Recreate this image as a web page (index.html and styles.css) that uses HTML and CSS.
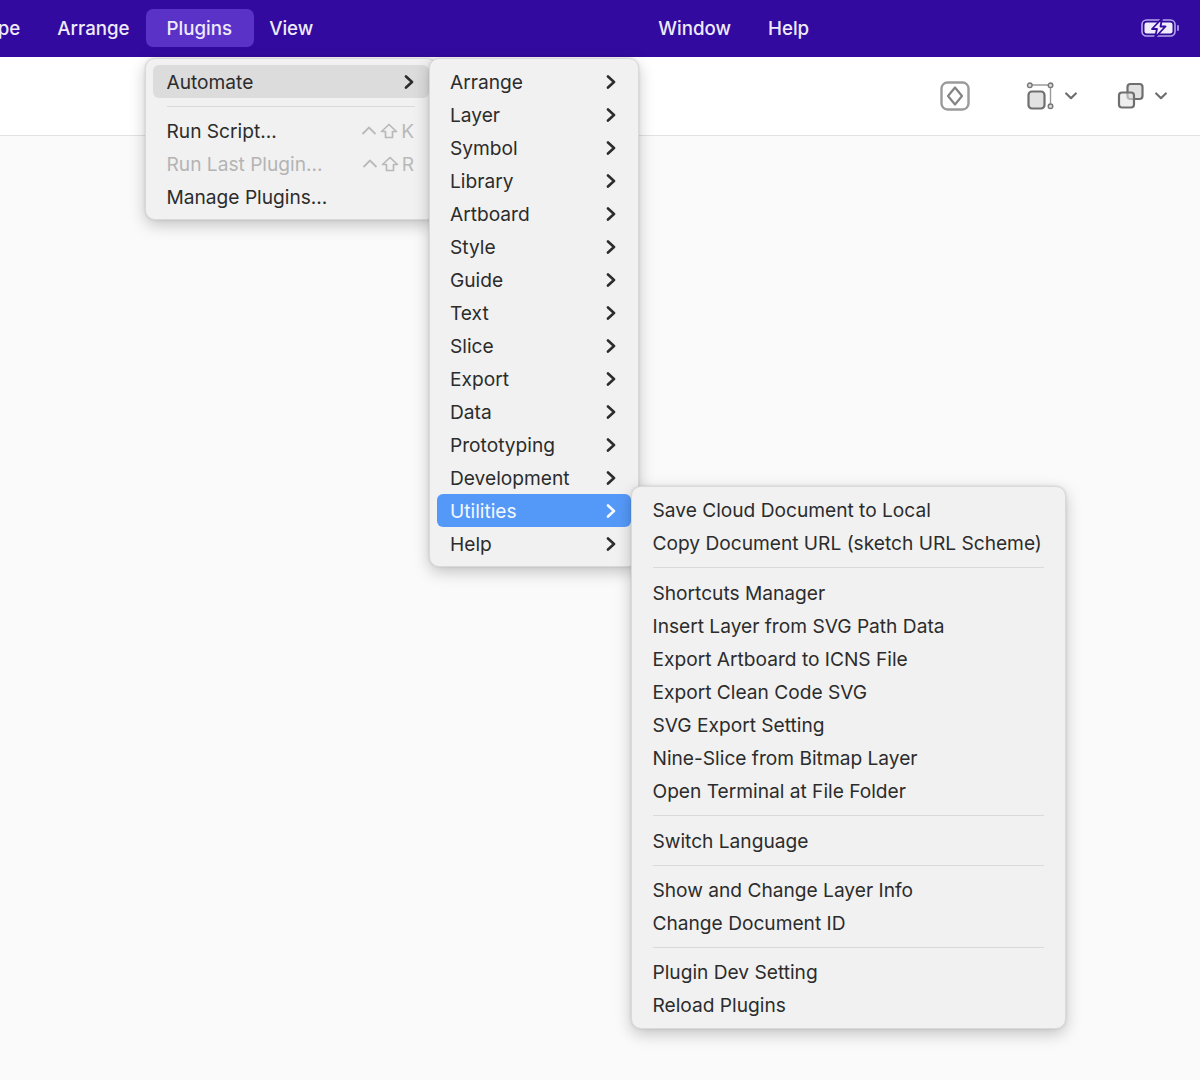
FILE: index.html
```html
<!DOCTYPE html>
<html lang="en">
<head>
<meta charset="utf-8">
<title>Plugins menu</title>
<link rel="stylesheet" href="styles.css">
</head>
<body>
<svg class="defs" width="0" height="0" aria-hidden="true">
  <symbol id="chev" viewBox="0 0 10 14"><path d="M2 1.500 8 7l-6 5.500" fill="none" stroke="currentColor" stroke-width="2.600" stroke-linecap="round" stroke-linejoin="round"/></symbol>
  <symbol id="down" viewBox="0 0 12 8"><path d="M1.200 1.500 6 6.200l4.800-4.700" fill="none" stroke="#6e6e6e" stroke-width="2.200" stroke-linecap="round" stroke-linejoin="round"/></symbol>
  <symbol id="ctrl" viewBox="0 0 16 12"><path d="M1.500 9 8 2.500 14.500 9" fill="none" stroke="currentColor" stroke-width="1.800"/></symbol>
  <symbol id="shift" viewBox="0 0 18 16"><path d="M9 1.500 16.500 8.500H12.500V14.500H5.500V8.500H1.500Z" fill="none" stroke="currentColor" stroke-width="1.700" stroke-linejoin="round"/></symbol>
</svg>

<header class="menubar">
  <nav class="menu-left">
    <span class="bar-item type">Type</span>
    <span class="bar-item">Arrange</span>
    <span class="bar-item active">Plugins</span>
    <span class="bar-item">View</span>
  </nav>
  <nav class="menu-mid">
    <span class="bar-item">Window</span>
    <span class="bar-item">Help</span>
  </nav>
  <svg class="battery" width="40" height="20" viewBox="0 0 40 20" aria-label="Battery charging">
    <rect x="1" y="2" width="33" height="16" rx="4.500" fill="#2f0c98" stroke="#b7a3ec" stroke-width="1.600"/>
    <rect x="3.500" y="4.500" width="28" height="11" rx="2.200" fill="#f0ebfb"/>
    <rect x="36" y="7" width="2" height="6" rx="1" fill="#9f8ae0"/>
    <path d="M21 0.500 11 11H16l-2 8.500 10.500-11H19.500Z" fill="#f0ebfb" stroke="#330a9f" stroke-width="1.800" stroke-linejoin="round"/>
  </svg>
</header>

<section class="toolbar">
  <svg class="tool-a" width="30" height="30" viewBox="0 0 30 30" aria-label="Component">
    <rect x="1.500" y="1.500" width="27" height="27" rx="6" fill="#fff" stroke="#9b9b9b" stroke-width="2.400"/>
    <path d="M15 6.500 22 15 15 23.500 8 15Z" fill="#fff" stroke="#848484" stroke-width="2.200" stroke-linejoin="round"/>
  </svg>
  <div class="tool-group resize">
    <svg width="30" height="30" viewBox="0 0 30 30" aria-label="Resize">
      <path d="M4 3H24.500V24" fill="none" stroke="#9a9a9a" stroke-width="1.400"/>
      <circle cx="3.800" cy="3.300" r="2.300" fill="#d8d8d8" stroke="#777" stroke-width="1.400"/>
      <circle cx="24.500" cy="3.300" r="2.300" fill="#d8d8d8" stroke="#777" stroke-width="1.400"/>
      <circle cx="24.500" cy="24.300" r="2.300" fill="#d8d8d8" stroke="#777" stroke-width="1.400"/>
      <rect x="2.500" y="9.500" width="16" height="17" rx="3.500" fill="#e2e2e2" stroke="#6f6f6f" stroke-width="2.200"/>
    </svg>
    <svg class="caret" width="12" height="8"><use href="#down"/></svg>
  </div>
  <div class="tool-group combine">
    <svg width="28" height="28" viewBox="0 0 28 28" aria-label="Combine">
      <rect x="10.500" y="2" width="15" height="15" rx="3" fill="#e2e2e2" stroke="#6f6f6f" stroke-width="2.200"/>
      <rect x="2" y="10.500" width="15" height="15" rx="3" fill="#e2e2e2" fill-opacity=".6" stroke="#6f6f6f" stroke-width="2.200"/>
    </svg>
    <svg class="caret" width="12" height="8"><use href="#down"/></svg>
  </div>
</section>
<main class="canvas"></main>

<div class="menu menu-one">
  <div class="row hover"><span>Automate</span><svg class="chev" width="10" height="14"><use href="#chev"/></svg></div>
  <div class="sep tight"></div>
  <div class="row"><span>Run Script...</span><span class="keys"><svg width="16" height="12"><use href="#ctrl"/></svg><svg width="18" height="16"><use href="#shift"/></svg><span>K</span></span></div>
  <div class="row disabled"><span>Run Last Plugin...</span><span class="keys"><svg width="16" height="12"><use href="#ctrl"/></svg><svg width="18" height="16"><use href="#shift"/></svg><span>R</span></span></div>
  <div class="row"><span>Manage Plugins...</span></div>
</div>

<div class="menu menu-two">
  <div class="row"><span>Arrange</span><svg class="chev" width="10" height="14"><use href="#chev"/></svg></div>
  <div class="row"><span>Layer</span><svg class="chev" width="10" height="14"><use href="#chev"/></svg></div>
  <div class="row"><span>Symbol</span><svg class="chev" width="10" height="14"><use href="#chev"/></svg></div>
  <div class="row"><span>Library</span><svg class="chev" width="10" height="14"><use href="#chev"/></svg></div>
  <div class="row"><span>Artboard</span><svg class="chev" width="10" height="14"><use href="#chev"/></svg></div>
  <div class="row"><span>Style</span><svg class="chev" width="10" height="14"><use href="#chev"/></svg></div>
  <div class="row"><span>Guide</span><svg class="chev" width="10" height="14"><use href="#chev"/></svg></div>
  <div class="row"><span>Text</span><svg class="chev" width="10" height="14"><use href="#chev"/></svg></div>
  <div class="row"><span>Slice</span><svg class="chev" width="10" height="14"><use href="#chev"/></svg></div>
  <div class="row"><span>Export</span><svg class="chev" width="10" height="14"><use href="#chev"/></svg></div>
  <div class="row"><span>Data</span><svg class="chev" width="10" height="14"><use href="#chev"/></svg></div>
  <div class="row"><span>Prototyping</span><svg class="chev" width="10" height="14"><use href="#chev"/></svg></div>
  <div class="row"><span>Development</span><svg class="chev" width="10" height="14"><use href="#chev"/></svg></div>
  <div class="row selected"><span>Utilities</span><svg class="chev" width="10" height="14"><use href="#chev"/></svg></div>
  <div class="row"><span>Help</span><svg class="chev" width="10" height="14"><use href="#chev"/></svg></div>
</div>

<div class="menu menu-three">
  <div class="row"><span>Save Cloud Document to Local</span></div>
  <div class="row"><span>Copy Document URL (sketch URL Scheme)</span></div>
  <div class="sep"></div>
  <div class="row"><span>Shortcuts Manager</span></div>
  <div class="row"><span>Insert Layer from SVG Path Data</span></div>
  <div class="row"><span>Export Artboard to ICNS File</span></div>
  <div class="row"><span>Export Clean Code SVG</span></div>
  <div class="row"><span>SVG Export Setting</span></div>
  <div class="row"><span>Nine-Slice from Bitmap Layer</span></div>
  <div class="row"><span>Open Terminal at File Folder</span></div>
  <div class="sep"></div>
  <div class="row"><span>Switch Language</span></div>
  <div class="sep tight"></div>
  <div class="row"><span>Show and Change Layer Info</span></div>
  <div class="row"><span>Change Document ID</span></div>
  <div class="sep tight"></div>
  <div class="row"><span>Plugin Dev Setting</span></div>
  <div class="row"><span>Reload Plugins</span></div>
</div>
</body>
</html>
```

FILE: styles.css
```css
* { box-sizing: border-box; }
html, body { margin: 0; height: 1080px; overflow: hidden; }
body {
  background: #fafafa;
  font-family: Inter, "Liberation Sans", sans-serif;
  font-size: 19.15px;
  color: #2c2c2c;
  display: flex;
  flex-direction: column;
  position: relative;
}
.defs { position: absolute; }

.menubar {
  height: 57px;
  flex: none;
  background: #330a9f;
  display: flex;
  align-items: center;
  padding-bottom: 1px;
  color: #efeafb;
  font-size: 18.7px;
  font-weight: 500;
}
.menu-left { display: flex; gap: 37px; margin-left: -24px; }
.menu-mid { display: flex; gap: 37px; margin-left: 345px; }
.bar-item { position: relative; white-space: nowrap; z-index: 0; }
.bar-item.active::before {
  content: "";
  position: absolute;
  z-index: -1;
  inset: -8px -22px -7px -21px;
  background: #5a32c8;
  border-radius: 7px;
}
.battery { margin-left: auto; margin-right: 19px; }

.toolbar {
  height: 79px;
  flex: none;
  background: #fff;
  border-bottom: 1px solid #e2e2e2;
  display: flex;
  align-items: center;
  justify-content: flex-end;
  padding-right: 33px;
}
.tool-a { margin-right: 56px; }
.tool-group { display: flex; align-items: center; }
.tool-group .caret { margin-left: 9px; }
.resize { margin-right: 40px; }
.resize svg:first-child { margin-top: 2px; }
.combine .caret { margin-left: 10px; }

.canvas { flex: 1; }

.menu {
  position: absolute;
  background: #f1f1f1;
  border: 1px solid #d9d9d9;
  border-radius: 10px;
  padding: 6px 7px;
  box-shadow: 0 5px 16px rgba(0, 0, 0, .22), 0 0 3px rgba(0, 0, 0, .12);
}
.menu-one { left: 145px; top: 58px; width: 292px; z-index: 1; }
.menu-two { left: 429px; top: 58px; width: 210px; z-index: 2; }
.menu-three { left: 631px; top: 486px; width: 435px; z-index: 3; padding-bottom: 7px; }

.row {
  height: 33px;
  padding: 0 14px 0 13px;
  display: flex;
  align-items: center;
  justify-content: space-between;
  border-radius: 6px;
  white-space: nowrap;
}
.menu-one .row { padding-left: 13.500px; }
.menu-three .row { padding-left: 13.500px; }
.row.hover { background: #dcdcdc; }
.row.selected { background: #5599f8; color: #f4f8ff; }
.row.disabled { color: #b4b4b4; }
.chev { color: #2c2c2c; margin-right: 1px; flex: none; }
.selected .chev { color: #f4f8ff; }

.keys {
  display: flex;
  align-items: center;
  gap: 3px;
  color: #b9b9b9;
  margin-right: 1px;
}

.sep {
  height: 1px;
  margin: 8px 14px;
  background: #dadada;
}
.sep.tight { margin-block: 7.500px; }
```
